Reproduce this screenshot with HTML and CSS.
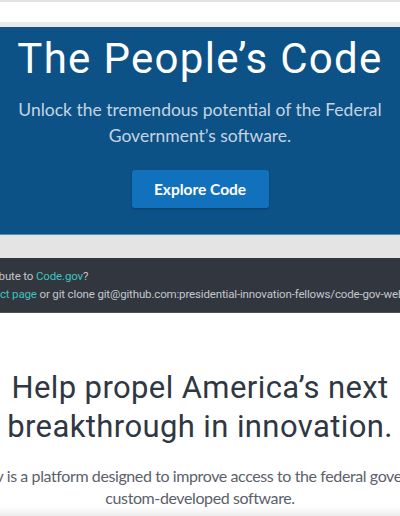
FILE: index.html
```html
<!DOCTYPE html>
<html lang="en">
<head>
<meta charset="utf-8">
<title>Code.gov</title>
<link rel="stylesheet" href="styles.css">
</head>
<body>
  <header class="topbar"></header>
  <section class="hero">
    <h1 class="hero-title">The People’s Code</h1>
    <p class="hero-lead">Unlock the tremendous potential of the Federal Government’s software.</p>
    <a class="btn" href="#">Explore Code</a>
  </section>
  <div class="spacer-band"></div>
  <section class="contrib">
    <div class="contrib-inner">
      <p class="contrib-line">Want to contribute to <a class="teal" href="#">Code.gov</a>?</p>
      <p class="contrib-line">View our <a class="teal" href="#">project page</a> or git clone git@github.com:presidential-innovation-fellows/code-gov-web.git</p>
    </div>
  </section>
  <section class="mission">
    <h2 class="mission-title">Help propel America’s next breakthrough in innovation.</h2>
    <p class="mission-text">Code.gov is a platform designed to improve access to the federal government’s custom-developed software.</p>
    <div class="card"></div>
  </section>
</body>
</html>
```
FILE: styles.css
```css
html, body {
  margin: 0;
  padding: 0;
  width: 400px;
  height: 516px;
  overflow: hidden;
  background: #ffffff;
}

p, h1, h2 { margin: 0; }

.topbar {
  height: 20px;
  border-top: 2px solid #e2e2e2;
  border-bottom: 5px solid #e9e9e9;
  background: #ffffff;
}

.hero {
  background: #0c5287;
  padding: 7px 0 26px;
  display: flex;
  flex-direction: column;
  align-items: center;
  text-align: center;
}

.hero-title {
  font-family: Roboto, "Liberation Sans", sans-serif;
  font-weight: 400;
  font-size: 42px;
  line-height: 50px;
  letter-spacing: 1.3px;
  color: #ffffff;
  white-space: nowrap;
}

.hero-lead {
  margin-top: 13px;
  width: 380px;
  font-family: Lato, "Open Sans", sans-serif;
  font-size: 17.5px;
  line-height: 26px;
  color: #c6d4e2;
}

.btn {
  margin-top: 21px;
  width: 137px;
  height: 38px;
  display: flex;
  align-items: center;
  justify-content: center;
  background: #1271bd;
  border-radius: 3px;
  box-shadow: 0 1px 2px rgba(0, 0, 0, 0.25);
  font-family: Lato, "Open Sans", sans-serif;
  font-weight: 700;
  font-size: 15.5px;
  color: #ffffff;
  text-decoration: none;
}

.spacer-band {
  height: 24px;
  background: #e4e4e4;
  border-top: 1px solid #5d87ad;
  box-sizing: border-box;
}

.contrib {
  height: 55px;
  background: #31363f;
  border-bottom: 1px solid #4a4f58;
  box-sizing: border-box;
  overflow: hidden;
  padding-top: 9px;
}

.contrib-inner {
  margin-left: -71px;
  white-space: nowrap;
}

.contrib-line {
  font-family: Roboto, "Liberation Sans", sans-serif;
  font-size: 11.5px;
  line-height: 18px;
  letter-spacing: -0.15px;
  color: #c3c7cc;
}

.teal {
  color: #3fc4bd;
  text-decoration: none;
}

.mission {
  padding-top: 55px;
  display: flex;
  flex-direction: column;
  align-items: center;
  text-align: center;
}

.mission-title {
  width: 400px;
  font-family: Roboto, "Liberation Sans", sans-serif;
  font-weight: 400;
  font-size: 31px;
  line-height: 39px;
  letter-spacing: 0.4px;
  color: #2f3742;
}

.mission-text {
  margin-top: 19px;
  width: 520px;
  font-family: Lato, "Open Sans", sans-serif;
  font-size: 16px;
  line-height: 22px;
  letter-spacing: -0.4px;
  color: #5b616b;
}

.card {
  margin-top: 8px;
  width: 440px;
  height: 40px;
  background: #ffffff;
  box-shadow: 0 -3px 10px rgba(0, 0, 0, 0.12);
}
```
